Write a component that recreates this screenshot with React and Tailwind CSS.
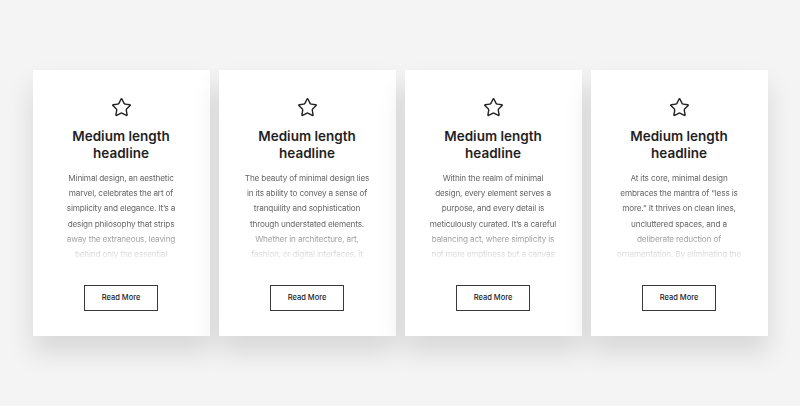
import { Star } from 'lucide-react'

const CARDS = [
  [
    'Minimal design, an aesthetic',
    'marvel, celebrates the art of',
    'simplicity and elegance. It’s a',
    'design philosophy that strips',
    'away the extraneous, leaving',
    'behind only the essential',
  ],
  [
    'The beauty of minimal design lies',
    'in its ability to convey a sense of',
    'tranquility and sophistication',
    'through understated elements.',
    'Whether in architecture, art,',
    'fashion, or digital interfaces, it',
  ],
  [
    'Within the realm of minimal',
    'design, every element serves a',
    'purpose, and every detail is',
    'meticulously curated. It’s a careful',
    'balancing act, where simplicity is',
    'not mere emptiness but a canvas',
  ],
  [
    'At its core, minimal design',
    'embraces the mantra of “less is',
    'more.” It thrives on clean lines,',
    'uncluttered spaces, and a',
    'deliberate reduction of',
    'ornamentation. By eliminating the',
  ],
]

function Card({ lines }) {
  return (
    <div className="w-[177px] bg-white flex flex-col items-center pt-[27px] pb-[25px] shadow-[0_16px_26px_rgba(0,0,0,0.12)]">
      <Star className="w-[21px] h-[21px] text-[#222]" strokeWidth={1.6} />
      <h2 className="mt-[10px] text-[13.5px] leading-[17px] font-semibold text-[#1f1f1f] text-center">
        Medium length
        <br />
        headline
      </h2>
      <div className="mt-[9px] h-[92px] overflow-hidden text-center text-[8.2px] tracking-[-0.02em] leading-[15.2px] text-[#666] [mask-image:linear-gradient(to_bottom,black_58%,transparent_100%)]">
        {lines.map((l) => (
          <div key={l} className="whitespace-nowrap">{l}</div>
        ))}
      </div>
      <button className="mt-[22px] w-[74px] h-[26px] border-[1.5px] border-[#3a3a3a] text-[7.5px] text-[#222] font-medium">
        Read More
      </button>
    </div>
  )
}

export default function App() {
  return (
    <div className="w-full h-[406px] bg-[#f4f4f4] flex items-start justify-center pt-[70px] gap-[9px] font-['Inter',sans-serif]">
      {CARDS.map((lines, i) => (
        <Card key={i} lines={lines} />
      ))}
    </div>
  )
}
